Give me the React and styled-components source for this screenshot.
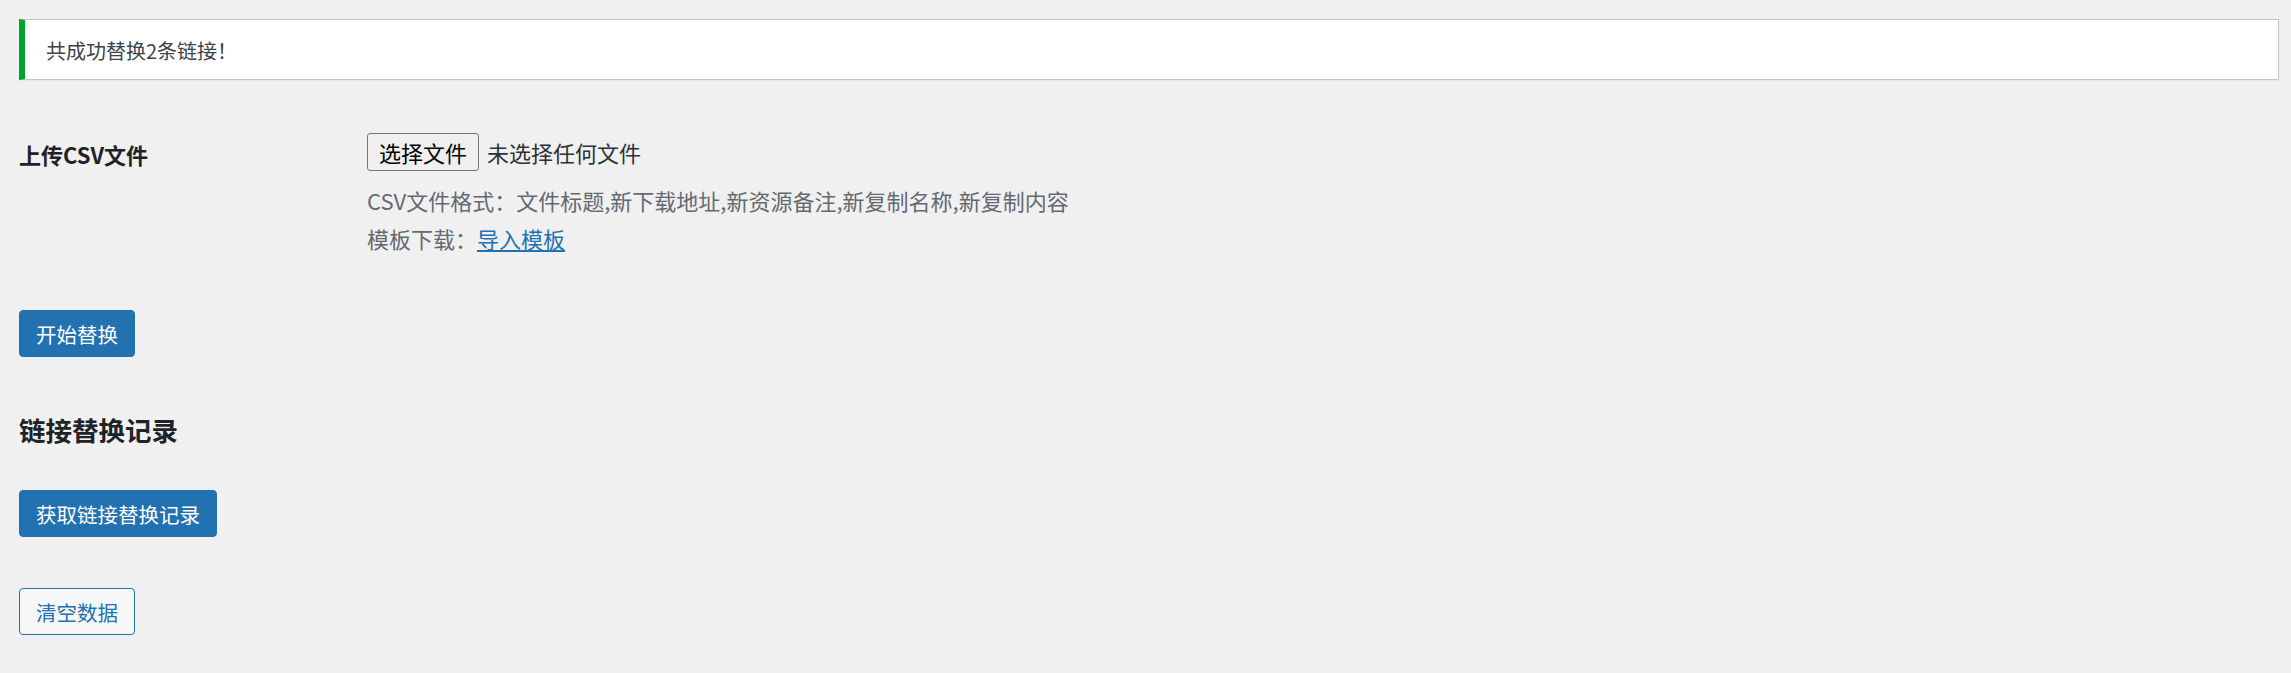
import styled, { createGlobalStyle } from 'styled-components';

const GlobalStyle = createGlobalStyle`
  html, body {
    margin: 0;
    background: #f0f0f1;
  }
  body {
    font-family: "Noto Sans CJK SC", "Noto Sans", sans-serif;
    color: #3c434a;
  }
`;

const App = () => {
  return (
    <>
      <GlobalStyle />
      <Page>
        <Notice>
          <p>共成功替换2条链接！</p>
        </Notice>
        <FormTable>
          <Label>上传CSV文件</Label>
          <Field>
            <FileRow>
              <FileButton type="button">选择文件</FileButton>
              <FileName>未选择任何文件</FileName>
            </FileRow>
            <Desc $first>CSV文件格式：文件标题,新下载地址,新资源备注,新复制名称,新复制内容</Desc>
            <Desc>
              模板下载：<TemplateLink href="#">导入模板</TemplateLink>
            </Desc>
          </Field>
        </FormTable>
        <Button $top={53}>开始替换</Button>
        <Heading>链接替换记录</Heading>
        <Button $top={42}>获取链接替换记录</Button>
        <Button $top={51} $secondary>
          清空数据
        </Button>
      </Page>
    </>
  );
};

const Page = styled.div`
  display: flex;
  flex-direction: column;
  align-items: flex-start;
  padding: 19px 12px 0 19px;
`;

const Notice = styled.div`
  align-self: stretch;
  box-sizing: border-box;
  height: 61px;
  display: flex;
  align-items: center;
  padding: 2px 0 0 21px;
  background: #fff;
  border: 1px solid #c3c4c7;
  border-left: 6px solid #00a32a;
  box-shadow: 0 1px 1px rgba(0, 0, 0, 0.04);
  p {
    margin: 0;
    font-size: 20px;
    color: #3c434a;
  }
`;

const FormTable = styled.div`
  display: grid;
  grid-template-columns: 348px 1fr;
  margin-top: 53px;
`;

const Label = styled.div`
  font-size: 22px;
  font-weight: 700;
  color: #1d2327;
  line-height: 38px;
  padding-top: 2px;
`;

const Field = styled.div`
  display: flex;
  flex-direction: column;
`;

const FileRow = styled.div`
  display: flex;
  align-items: center;
  gap: 8px;
`;

const FileButton = styled.button`
  box-sizing: border-box;
  height: 38px;
  padding: 0 11px;
  font-family: inherit;
  font-size: 22px;
  color: #000;
  background: #efefef;
  border: 1px solid #767676;
  border-radius: 3px;
`;

const FileName = styled.span`
  font-size: 22px;
  color: #2c3338;
`;

const Desc = styled.p`
  margin: ${(p) => (p.$first ? '10px' : '0')} 0 0;
  font-size: 22px;
  line-height: 38px;
  color: #646970;
`;

const TemplateLink = styled.a`
  color: #2271b1;
  text-decoration: underline;
`;

const Button = styled.button`
  box-sizing: border-box;
  height: 47px;
  margin-top: ${(p) => p.$top}px;
  padding: 0 16px;
  font-family: inherit;
  font-size: 20.5px;
  color: ${(p) => (p.$secondary ? '#2271b1' : '#fff')};
  background: ${(p) => (p.$secondary ? '#f6f7f7' : '#2271b1')};
  border: 1px solid #2271b1;
  border-radius: 4px;
`;

const Heading = styled.h2`
  margin: 55px 0 0;
  font-size: 26.5px;
  line-height: 36px;
  font-weight: 700;
  color: #1d2327;
`;

export default App;
